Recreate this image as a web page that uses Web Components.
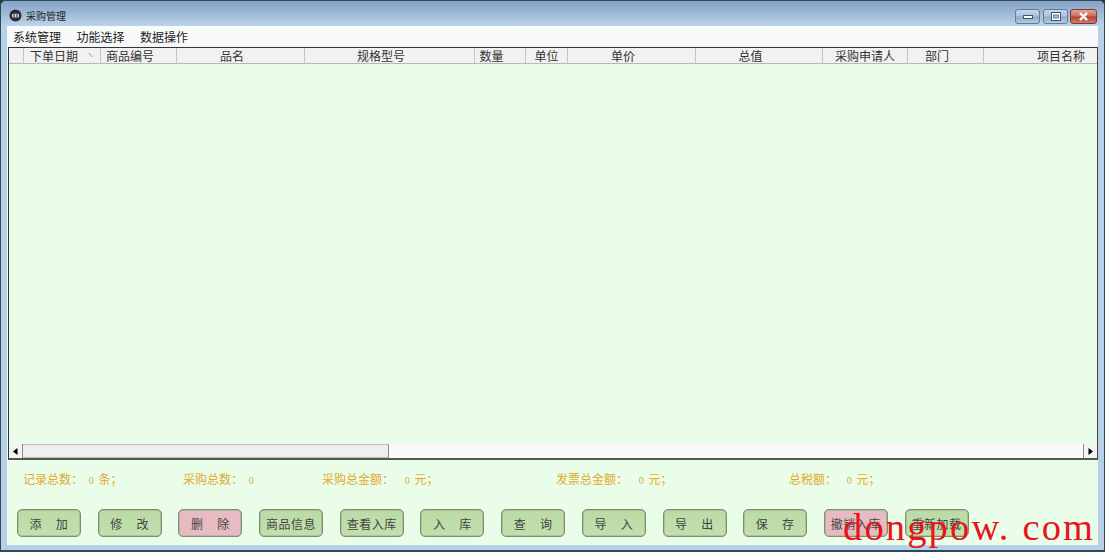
<!DOCTYPE html>
<html><head><meta charset="utf-8">
<style>html,body{margin:0;padding:0;background:#1d3b44;width:1105px;height:552px;overflow:hidden}</style>
</head><body>
<template id="win-t"><style>
:host{display:flex;flex-direction:column;position:relative;box-sizing:border-box;width:1105px;height:552px;border:1px solid #2c4a58;border-radius:6px 6px 0 0;border-bottom-width:2px;background:#b6d0e8;overflow:hidden;font-family:"Noto Sans CJK SC",sans-serif}
.tb{flex:none;height:25px;box-sizing:border-box;padding:3px 0 0 8px;display:flex;align-items:center;gap:4px;background-image:linear-gradient(#84a2c4,#bcd3e9);font-size:10px;color:#222}
.tb svg{flex:none}
.t{flex:1}
.ctl{display:flex;gap:3px;margin-right:7px;margin-top:2px}
.c{height:15px;box-sizing:border-box;border:1px solid #5f7c9c;border-radius:3px;background:linear-gradient(#c6d8ea 0,#a9c2dc 48%,#8dabc9 52%,#b3cbe2 100%);display:flex;align-items:center;justify-content:center}
.c.x{border-color:#7a3a3a;margin-left:-1px;background:linear-gradient(#e5a596 0,#cf6b5c 48%,#b8402f 52%,#d27c68 100%)}
.in{flex:1;margin:0 6px 5px 6px;display:flex;flex-direction:column;background:#e9fde9;min-height:0}
</style>
<div class="tb">
<svg width="13" height="13" viewBox="0 0 13 13"><circle cx="6.5" cy="6.5" r="6" fill="#2b2b33"/><rect x="3" y="4.8" width="7" height="3.6" rx="1" fill="#d9d9df"/><path d="M5 4.8v3.6M8 4.8v3.6" stroke="#2b2b33"/></svg>
<span class="t"><slot name="title"></slot></span>
<div class="ctl">
<div class="c" style="width:25px"><svg width="10" height="6"><rect x="0.5" y="2.5" width="9" height="3" fill="#fff" stroke="#40566f"/></svg></div>
<div class="c" style="width:25px"><svg width="10" height="9"><rect x="0.5" y="0.5" width="9" height="8" fill="#fff" stroke="#40566f"/><rect x="2.5" y="3" width="5" height="3" fill="#a9c2dc" stroke="#40566f" stroke-width=".7"/></svg></div>
<div class="c x" style="width:27px"><svg width="11" height="9" viewBox="0 0 11 9"><path d="M2 1l7 7M9 1L2 8" stroke="#fff" stroke-width="2.4"/></svg></div>
</div></div>
<div class="in"><slot></slot></div>
</template>

<template id="menu-t"><style>
:host{display:flex;flex:none;height:21px;align-items:center;gap:15.5px;background:linear-gradient(#fbfcfe,#f5f6f8);padding-left:6px;font-size:12px;color:#222;line-height:21px}
</style><slot></slot></template>

<template id="grid-t"><style>
:host{display:flex;flex-direction:column;flex:none;height:413px;box-sizing:border-box;margin-left:1px;border:1px solid #333;border-bottom:2px solid #555;border-right:1px solid #444;background:#e9fde9;overflow:hidden}
.h{flex:none;height:15px;display:grid;grid-template-columns:15px 77px 76px 128px 170px 51px 42px 128px 127px 85px 76px 1fr;background:#f1f1f1;border-bottom:1px solid #b8b8b8}
.b{flex:1}
.s{flex:none;height:14px;display:flex;align-items:center;background:#f0f0f0}
.a{width:14px;height:14px;box-sizing:border-box;display:flex;align-items:center;justify-content:center;background:#f4f4f4;border-right:1px solid #888}
.th{flex:1;height:14px;background:#efefef;box-sizing:border-box;border:1px solid #bbb;border-left:none;border-right:1px solid #888;max-width:366px}
.r{flex:1;height:14px;background:repeating-conic-gradient(#f5f6f5 0 25%,#fcfdfc 0 50%) 0 0/2px 2px}
.a2{width:14px;height:14px;box-sizing:border-box;display:flex;align-items:center;justify-content:center;background:#f4f4f4;border-left:1px solid #888}
</style>
<div class="h"><slot></slot></div>
<div class="b"></div>
<div class="s"><div class="a"><svg width="5" height="7"><path d="M4.5 0v7L0 3.5z" fill="#000"/></svg></div><div class="th"></div><div class="r"></div><div class="a2"><svg width="5" height="7"><path d="M0.5 0v7L5 3.5z" fill="#000"/></svg></div></div>
</template>

<template id="col-t"><style>
:host{display:flex;position:relative;align-items:center;justify-content:center;box-sizing:border-box;height:15px;font-size:12px;line-height:15px;color:#333;border-right:1px solid #c4c4c4;white-space:nowrap}
:host([end]){justify-content:flex-end;padding-right:12px;border-right:none}
:host([sort]){justify-content:flex-start;padding-left:6px}
:host([pad]){padding-right:17px}
.m{position:absolute;right:7px;top:5px;width:5px;height:5px}
</style><slot></slot><svg class="m" viewBox="0 0 5 5" style="display:var(--m,none)"><path d="M1 0l3 4" stroke="#999" fill="none"/></svg></template>

<template id="stats-t"><style>
:host{display:grid;flex:none;grid-template-columns:160px 139px 234px 233px auto;padding:0 0 2px 16px;height:39px;box-sizing:border-box;font-size:12px;line-height:18px;color:#e2a92c;align-items:center;white-space:nowrap}
</style><slot></slot></template>

<template id="bar-t"><style>
:host{display:flex;flex:none;gap:16.7px;padding:10px 0 0 10px}
</style><slot></slot></template>

<template id="btn-t"><style>
:host{display:flex;flex:none;width:64px;height:28px;box-sizing:border-box;align-items:center;justify-content:center;border:1px solid #77926a;border-radius:5px;box-shadow:inset 0 0 0 .5px #93ab84;background:linear-gradient(#bcdaa6,#c2dfae);font-size:12px;letter-spacing:.5px;word-spacing:1.4px;color:#444;white-space:pre}
:host([pink]){background:#e6bcc2;border-color:#7f8f74}
</style><slot></slot></template>

<template id="stat-t"><style>
:host{display:block}
::slotted(i){font:normal 10px "Liberation Serif",serif;margin:0 2px 0 var(--g,3px)}
</style><slot></slot></template>

<template id="mark-t"><style>
:host{position:absolute;left:842px;top:503px;font:38.5px/46px "Liberation Serif",serif;color:#e8141c;white-space:pre;letter-spacing:2.15px;pointer-events:none}
</style><slot></slot></template>

<app-window>
<span slot="title">采购管理</span>
<app-menu><span>系统管理</span><span>功能选择</span><span>数据操作</span></app-menu>
<data-grid>
<grid-col></grid-col>
<grid-col sort style="--m:block">下单日期</grid-col>
<grid-col pad>商品编号</grid-col>
<grid-col pad>品名</grid-col>
<grid-col pad>规格型号</grid-col>
<grid-col pad>数量</grid-col>
<grid-col>单位</grid-col>
<grid-col pad>单价</grid-col>
<grid-col pad>总值</grid-col>
<grid-col>采购申请人</grid-col>
<grid-col pad>部门</grid-col>
<grid-col end>项目名称</grid-col>
</data-grid>
<stats-row>
<stat-item>记录总数： <i>0</i> 条；</stat-item>
<stat-item>采购总数： <i>0</i></stat-item>
<stat-item style="--g:8px">采购总金额： <i>0</i> 元；</stat-item>
<stat-item style="--g:8px">发票总金额： <i>0</i> 元；</stat-item>
<stat-item style="--g:7px">总税额： <i>0</i> 元；</stat-item>
</stats-row>
<btn-bar>
<app-btn>添   加</app-btn><app-btn>修   改</app-btn><app-btn pink>删   除</app-btn><app-btn>商品信息</app-btn><app-btn>查看入库</app-btn><app-btn>入   库</app-btn><app-btn>查   询</app-btn><app-btn>导   入</app-btn><app-btn>导   出</app-btn><app-btn>保   存</app-btn><app-btn pink>撤销入库</app-btn><app-btn>重新加载</app-btn>
</btn-bar>
<water-mark>dongpow. com</water-mark>
</app-window>
<script>
for (const [tag, id] of [["app-window","win-t"],["app-menu","menu-t"],["data-grid","grid-t"],["grid-col","col-t"],["stats-row","stats-t"],["stat-item","stat-t"],["btn-bar","bar-t"],["app-btn","btn-t"],["water-mark","mark-t"]]) {
  customElements.define(tag, class extends HTMLElement {
    constructor(){super();this.attachShadow({mode:"open"}).appendChild(document.getElementById(id).content.cloneNode(true));}
  });
}
</script>
</body></html>
